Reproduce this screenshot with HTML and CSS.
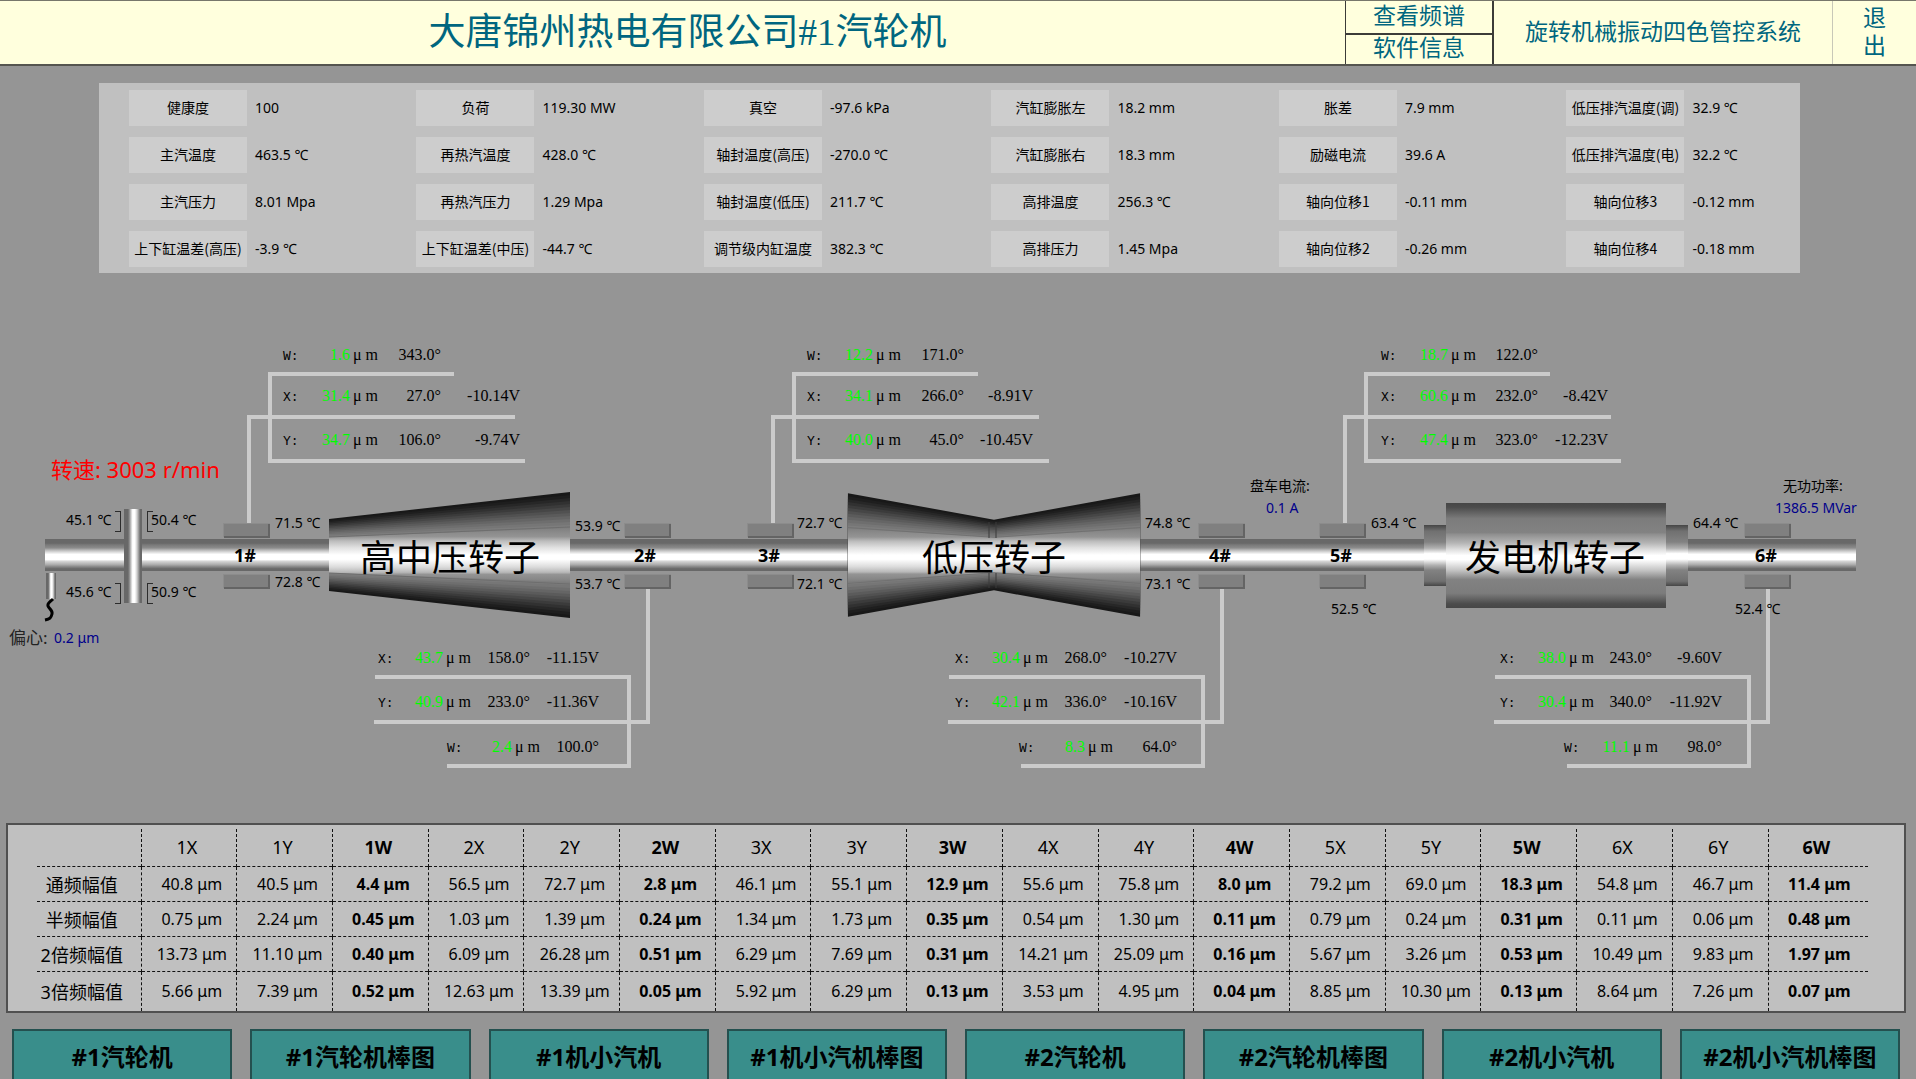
FILE: index.html
```html
<!DOCTYPE html>
<html lang="zh-CN">
<head>
<meta charset="utf-8">
<title>大唐锦州热电有限公司#1汽轮机</title>
<link rel="stylesheet" href="styles.css">
</head>
<body>
<header class="topbar">
  <h1 class="title">大唐锦州热电有限公司#1汽轮机</h1>
  <div class="tools">
    <button type="button" class="tool">查看频谱</button>
    <button type="button" class="tool">软件信息</button>
  </div>
  <div class="system">旋转机械振动四色管控系统</div>
  <button type="button" class="exit">退<br>出</button>
</header>

<main>
<dl class="summary">
  <div class="item"><dt>健康度</dt><dd>100</dd></div>
  <div class="item"><dt>主汽温度</dt><dd>463.5 ℃</dd></div>
  <div class="item"><dt>主汽压力</dt><dd>8.01 Mpa</dd></div>
  <div class="item"><dt>上下缸温差(高压)</dt><dd>-3.9 ℃</dd></div>
  <div class="item"><dt>负荷</dt><dd>119.30 MW</dd></div>
  <div class="item"><dt>再热汽温度</dt><dd>428.0 ℃</dd></div>
  <div class="item"><dt>再热汽压力</dt><dd>1.29 Mpa</dd></div>
  <div class="item"><dt>上下缸温差(中压)</dt><dd>-44.7 ℃</dd></div>
  <div class="item"><dt>真空</dt><dd>-97.6 kPa</dd></div>
  <div class="item"><dt>轴封温度(高压)</dt><dd>-270.0 ℃</dd></div>
  <div class="item"><dt>轴封温度(低压)</dt><dd>211.7 ℃</dd></div>
  <div class="item"><dt>调节级内缸温度</dt><dd>382.3 ℃</dd></div>
  <div class="item"><dt>汽缸膨胀左</dt><dd>18.2 mm</dd></div>
  <div class="item"><dt>汽缸膨胀右</dt><dd>18.3 mm</dd></div>
  <div class="item"><dt>高排温度</dt><dd>256.3 ℃</dd></div>
  <div class="item"><dt>高排压力</dt><dd>1.45 Mpa</dd></div>
  <div class="item"><dt>胀差</dt><dd>7.9 mm</dd></div>
  <div class="item"><dt>励磁电流</dt><dd>39.6 A</dd></div>
  <div class="item"><dt>轴向位移1</dt><dd>-0.11 mm</dd></div>
  <div class="item"><dt>轴向位移2</dt><dd>-0.26 mm</dd></div>
  <div class="item"><dt>低压排汽温度(调)</dt><dd>32.9 ℃</dd></div>
  <div class="item"><dt>低压排汽温度(电)</dt><dd>32.2 ℃</dd></div>
  <div class="item"><dt>轴向位移3</dt><dd>-0.12 mm</dd></div>
  <div class="item"><dt>轴向位移4</dt><dd>-0.18 mm</dd></div>
</dl>

<svg class="diagram" viewBox="0 273 1916 550" role="img" aria-label="汽轮机轴系图">
  <defs>
    <linearGradient id="shaft" x1="0" y1="0" x2="0" y2="1">
      <stop offset="0" stop-color="#686868"/><stop offset=".13" stop-color="#686868"/>
      <stop offset=".18" stop-color="#787878"/><stop offset=".28" stop-color="#8c8c8c"/>
      <stop offset=".34" stop-color="#b4b4b4"/><stop offset=".42" stop-color="#e0e0e0"/>
      <stop offset=".48" stop-color="#fff"/><stop offset=".64" stop-color="#fff"/>
      <stop offset=".7" stop-color="#d4d4d4"/><stop offset=".8" stop-color="#acacac"/>
      <stop offset=".87" stop-color="#868686"/><stop offset=".93" stop-color="#686868"/>
      <stop offset="1" stop-color="#686868"/>
    </linearGradient>
    <linearGradient id="disc">
      <stop offset="0" stop-color="#686868"/><stop offset=".22" stop-color="#686868"/>
      <stop offset=".3" stop-color="#8c8c8c"/><stop offset=".4" stop-color="#d0d0d0"/>
      <stop offset=".48" stop-color="#fff"/><stop offset=".6" stop-color="#fff"/>
      <stop offset=".72" stop-color="#d0d0d0"/><stop offset=".84" stop-color="#8c8c8c"/>
      <stop offset=".9" stop-color="#686868"/><stop offset="1" stop-color="#686868"/>
    </linearGradient>
    <linearGradient id="core" gradientUnits="userSpaceOnUse" x1="0" y1="-27" x2="0" y2="27">
      <stop offset="0" stop-color="#808080"/><stop offset=".16" stop-color="#949494"/>
      <stop offset=".24" stop-color="#bcbcbc"/><stop offset=".36" stop-color="#e0e0e0"/>
      <stop offset=".5" stop-color="#fff"/><stop offset=".58" stop-color="#fff"/>
      <stop offset=".72" stop-color="#dcdcdc"/><stop offset=".82" stop-color="#b8b8b8"/>
      <stop offset=".86" stop-color="#949494"/><stop offset="1" stop-color="#808080"/>
    </linearGradient>
    <linearGradient id="generator" x1="0" y1="0" x2="0" y2="1">
      <stop offset="0" stop-color="#464646"/><stop offset=".04" stop-color="#4c4c4c"/>
      <stop offset=".15" stop-color="#7c7c7c"/><stop offset=".28" stop-color="#828282"/>
      <stop offset=".3" stop-color="#909090"/><stop offset=".38" stop-color="#b4b4b4"/>
      <stop offset=".44" stop-color="#dcdcdc"/><stop offset=".5" stop-color="#fff"/>
      <stop offset=".54" stop-color="#fff"/><stop offset=".64" stop-color="#c4c4c4"/>
      <stop offset=".71" stop-color="#909090"/><stop offset=".73" stop-color="#828282"/>
      <stop offset=".86" stop-color="#7c7c7c"/><stop offset=".96" stop-color="#4c4c4c"/>
      <stop offset="1" stop-color="#464646"/>
    </linearGradient>
    <linearGradient id="collar" x1="0" y1="0" x2="0" y2="1">
      <stop offset="0" stop-color="#464646"/><stop offset=".1" stop-color="#707070"/>
      <stop offset=".28" stop-color="#828282"/><stop offset=".38" stop-color="#b0b0b0"/>
      <stop offset=".47" stop-color="#fff"/><stop offset=".56" stop-color="#fff"/>
      <stop offset=".66" stop-color="#b0b0b0"/><stop offset=".74" stop-color="#828282"/>
      <stop offset=".92" stop-color="#707070"/><stop offset="1" stop-color="#464646"/>
    </linearGradient>
    <!-- conical casing, narrow end at the origin, centred on the shaft axis -->
    <g id="cone">
      <path fill="#181818" d="M0-36 241-63V63L0 36Z"/>
      <path fill="#1e1e1e" d="M0-34.5 241-60V60L0 34.5Z"/>
      <path fill="#272727" d="M0-33 241-57V57L0 33Z"/>
      <path fill="#313131" d="M0-31.5 241-54V54L0 31.5Z"/>
      <path fill="#3b3b3b" d="M0-30 241-51V51L0 30Z"/>
      <path fill="#464646" d="M0-28.5 241-48V48L0 28.5Z"/>
      <path fill="#515151" d="M0-27 241-45V45L0 27Z"/>
      <path fill="#5b5b5b" d="M0-25.5 241-42V42L0 25.5Z"/>
      <path fill="#656565" d="M0-24 241-39V39L0 24Z"/>
      <path fill="#6e6e6e" d="M0-22.5 241-36V36L0 22.5Z"/>
      <path fill="#767676" d="M0-21 241-33V33L0 21Z"/>
      <path fill="#7d7d7d" d="M0-19.5 241-30V30L0 19.5Z"/>
      <path fill="url(#core)" d="M0-18 241-27V27L0 18Z"/>
      <path fill="none" stroke="#6e6e6e" d="M0-18 241-28M0 18 241 29"/>
    </g>
    <g id="pad">
      <path fill="#8c8c8c" d="M-1-1H46V13H-1Z"/>
      <path fill="#646464" d="M0 14V12H44V0H46V14Z"/>
      <path fill="#808080" d="M0 0H44V12H0Z"/>
    </g>
    <g id="lead-up">
      <path d="M184 374H0V461H255M245 417H-21V523"/>
    </g>
    <g id="lead-down">
      <path d="M-254 677H0V766H-182M-255 722H19V588"/>
    </g>
  </defs>

  <rect x="45" y="539" width="1811" height="32" fill="url(#shaft)"/>
  <rect x="124" y="509" width="18" height="94" fill="url(#disc)"/>
  <rect x="46" y="573" width="10" height="26" fill="url(#disc)"/>
  <path class="wire" d="M53 599C50 602 47 603 48 606S53 610 52 614 50 619 45 620"/>
  <path class="bracket" d="M115 511H120V531H115M115 583H120V603H115M153 511H147V531H153M153 583H147V603H153"/>

  <use href="#cone" transform="translate(329 555)"/>
  <use href="#cone" transform="translate(994 555) scale(.606 .98)"/>
  <use href="#cone" transform="translate(994 555) scale(-.606 .98)"/>
  <path class="seam" d="M989 522V538M996 522V538M989 573V588M996 573V588"/>
  <rect x="1424" y="525" width="22" height="61" fill="url(#collar)"/>
  <rect x="1666" y="525" width="22" height="61" fill="url(#collar)"/>
  <rect x="1446" y="503" width="220" height="105" fill="url(#generator)"/>

  <g class="leads">
    <use href="#lead-up" x="270"/><use href="#lead-up" x="794"/><use href="#lead-up" x="1366"/>
    <use href="#lead-down" x="629"/><use href="#lead-down" x="1203"/><use href="#lead-down" x="1749"/>
  </g>

  <use href="#pad" x="224" y="524"/><use href="#pad" x="224" y="575"/>
  <use href="#pad" x="625" y="524"/><use href="#pad" x="625" y="575"/>
  <use href="#pad" x="748" y="524"/><use href="#pad" x="748" y="575"/>
  <use href="#pad" x="1199" y="524"/><use href="#pad" x="1199" y="575"/>
  <use href="#pad" x="1320" y="524"/><use href="#pad" x="1320" y="575"/>
  <use href="#pad" x="1745" y="524"/><use href="#pad" x="1745" y="575"/>

  <g class="rotor">
    <text x="450" y="571">高中压转子</text>
    <text x="994" y="571">低压转子</text>
    <text x="1555" y="571">发电机转子</text>
  </g>
  <g class="bearing">
    <text x="245" y="562">1#</text><text x="645" y="562">2#</text><text x="769" y="562">3#</text>
    <text x="1220" y="562">4#</text><text x="1341" y="562">5#</text><text x="1766" y="562">6#</text>
  </g>

  <text class="speed" x="51" y="478">转速: 3003 r/min</text>
  <g class="temp">
    <text x="66" y="525">45.1 ℃</text><text x="151" y="525">50.4 ℃</text>
    <text x="66" y="597">45.6 ℃</text><text x="151" y="597">50.9 ℃</text>
    <text x="275" y="528">71.5 ℃</text><text x="275" y="587">72.8 ℃</text>
    <text x="575" y="531">53.9 ℃</text><text x="575" y="589">53.7 ℃</text>
    <text x="797" y="528">72.7 ℃</text><text x="797" y="589">72.1 ℃</text>
    <text x="1145" y="528">74.8 ℃</text><text x="1145" y="589">73.1 ℃</text>
    <text x="1371" y="528">63.4 ℃</text><text x="1331" y="614">52.5 ℃</text>
    <text x="1693" y="528">64.4 ℃</text><text x="1735" y="614">52.4 ℃</text>
    <text x="1250" y="491">盘车电流:</text><text x="1783" y="491">无功功率:</text>
    <text class="aux" x="1266" y="513">0.1 A</text><text class="aux" x="1775" y="513">1386.5 MVar</text>
    <text class="ecc" x="9" y="644">偏心:</text><text class="aux" x="54" y="643">0.2 μm</text>
  </g>

  <g class="probe">
    <text y="360"><tspan class="ch" x="283">W:</tspan><tspan class="amp" x="350">1.6</tspan><tspan x="353">μ m</tspan><tspan class="end" x="441">343.0°</tspan></text>
    <text y="401"><tspan class="ch" x="283">X:</tspan><tspan class="amp" x="350">31.4</tspan><tspan x="353">μ m</tspan><tspan class="end" x="441">27.0°</tspan><tspan class="end" x="520">-10.14V</tspan></text>
    <text y="445"><tspan class="ch" x="283">Y:</tspan><tspan class="amp" x="350">34.7</tspan><tspan x="353">μ m</tspan><tspan class="end" x="441">106.0°</tspan><tspan class="end" x="520">-9.74V</tspan></text>

    <text y="360"><tspan class="ch" x="807">W:</tspan><tspan class="amp" x="873">12.2</tspan><tspan x="876">μ m</tspan><tspan class="end" x="964">171.0°</tspan></text>
    <text y="401"><tspan class="ch" x="807">X:</tspan><tspan class="amp" x="873">34.1</tspan><tspan x="876">μ m</tspan><tspan class="end" x="964">266.0°</tspan><tspan class="end" x="1033">-8.91V</tspan></text>
    <text y="445"><tspan class="ch" x="807">Y:</tspan><tspan class="amp" x="873">40.0</tspan><tspan x="876">μ m</tspan><tspan class="end" x="964">45.0°</tspan><tspan class="end" x="1033">-10.45V</tspan></text>

    <text y="360"><tspan class="ch" x="1381">W:</tspan><tspan class="amp" x="1448">18.7</tspan><tspan x="1451">μ m</tspan><tspan class="end" x="1538">122.0°</tspan></text>
    <text y="401"><tspan class="ch" x="1381">X:</tspan><tspan class="amp" x="1448">60.6</tspan><tspan x="1451">μ m</tspan><tspan class="end" x="1538">232.0°</tspan><tspan class="end" x="1608">-8.42V</tspan></text>
    <text y="445"><tspan class="ch" x="1381">Y:</tspan><tspan class="amp" x="1448">47.4</tspan><tspan x="1451">μ m</tspan><tspan class="end" x="1538">323.0°</tspan><tspan class="end" x="1608">-12.23V</tspan></text>

    <text y="663"><tspan class="ch" x="378">X:</tspan><tspan class="amp" x="443">43.7</tspan><tspan x="446">μ m</tspan><tspan class="end" x="530">158.0°</tspan><tspan class="end" x="599">-11.15V</tspan></text>
    <text y="707"><tspan class="ch" x="378">Y:</tspan><tspan class="amp" x="443">40.9</tspan><tspan x="446">μ m</tspan><tspan class="end" x="530">233.0°</tspan><tspan class="end" x="599">-11.36V</tspan></text>
    <text y="752"><tspan class="ch" x="447">W:</tspan><tspan class="amp" x="512">2.4</tspan><tspan x="515">μ m</tspan><tspan class="end" x="599">100.0°</tspan></text>

    <text y="663"><tspan class="ch" x="955">X:</tspan><tspan class="amp" x="1020">30.4</tspan><tspan x="1023">μ m</tspan><tspan class="end" x="1107">268.0°</tspan><tspan class="end" x="1177">-10.27V</tspan></text>
    <text y="707"><tspan class="ch" x="955">Y:</tspan><tspan class="amp" x="1020">42.1</tspan><tspan x="1023">μ m</tspan><tspan class="end" x="1107">336.0°</tspan><tspan class="end" x="1177">-10.16V</tspan></text>
    <text y="752"><tspan class="ch" x="1019">W:</tspan><tspan class="amp" x="1085">8.3</tspan><tspan x="1088">μ m</tspan><tspan class="end" x="1177">64.0°</tspan></text>

    <text y="663"><tspan class="ch" x="1500">X:</tspan><tspan class="amp" x="1566">38.0</tspan><tspan x="1569">μ m</tspan><tspan class="end" x="1652">243.0°</tspan><tspan class="end" x="1722">-9.60V</tspan></text>
    <text y="707"><tspan class="ch" x="1500">Y:</tspan><tspan class="amp" x="1566">30.4</tspan><tspan x="1569">μ m</tspan><tspan class="end" x="1652">340.0°</tspan><tspan class="end" x="1722">-11.92V</tspan></text>
    <text y="752"><tspan class="ch" x="1564">W:</tspan><tspan class="amp" x="1630">11.1</tspan><tspan x="1633">μ m</tspan><tspan class="end" x="1722">98.0°</tspan></text>
  </g>
</svg>

<div class="spectrum">
<table>
  <thead>
    <tr><td></td><th scope="col">1X</th><th scope="col">1Y</th><th scope="col">1W</th><th scope="col">2X</th><th scope="col">2Y</th><th scope="col">2W</th><th scope="col">3X</th><th scope="col">3Y</th><th scope="col">3W</th><th scope="col">4X</th><th scope="col">4Y</th><th scope="col">4W</th><th scope="col">5X</th><th scope="col">5Y</th><th scope="col">5W</th><th scope="col">6X</th><th scope="col">6Y</th><th scope="col">6W</th></tr>
  </thead>
  <tbody>
    <tr><th scope="row">通频幅值</th><td>40.8 μm</td><td>40.5 μm</td><td>4.4 μm</td><td>56.5 μm</td><td>72.7 μm</td><td>2.8 μm</td><td>46.1 μm</td><td>55.1 μm</td><td>12.9 μm</td><td>55.6 μm</td><td>75.8 μm</td><td>8.0 μm</td><td>79.2 μm</td><td>69.0 μm</td><td>18.3 μm</td><td>54.8 μm</td><td>46.7 μm</td><td>11.4 μm</td></tr>
    <tr><th scope="row">半频幅值</th><td>0.75 μm</td><td>2.24 μm</td><td>0.45 μm</td><td>1.03 μm</td><td>1.39 μm</td><td>0.24 μm</td><td>1.34 μm</td><td>1.73 μm</td><td>0.35 μm</td><td>0.54 μm</td><td>1.30 μm</td><td>0.11 μm</td><td>0.79 μm</td><td>0.24 μm</td><td>0.31 μm</td><td>0.11 μm</td><td>0.06 μm</td><td>0.48 μm</td></tr>
    <tr><th scope="row">2倍频幅值</th><td>13.73 μm</td><td>11.10 μm</td><td>0.40 μm</td><td>6.09 μm</td><td>26.28 μm</td><td>0.51 μm</td><td>6.29 μm</td><td>7.69 μm</td><td>0.31 μm</td><td>14.21 μm</td><td>25.09 μm</td><td>0.16 μm</td><td>5.67 μm</td><td>3.26 μm</td><td>0.53 μm</td><td>10.49 μm</td><td>9.83 μm</td><td>1.97 μm</td></tr>
    <tr><th scope="row">3倍频幅值</th><td>5.66 μm</td><td>7.39 μm</td><td>0.52 μm</td><td>12.63 μm</td><td>13.39 μm</td><td>0.05 μm</td><td>5.92 μm</td><td>6.29 μm</td><td>0.13 μm</td><td>3.53 μm</td><td>4.95 μm</td><td>0.04 μm</td><td>8.85 μm</td><td>10.30 μm</td><td>0.13 μm</td><td>8.64 μm</td><td>7.26 μm</td><td>0.07 μm</td></tr>
  </tbody>
</table>
</div>
</main>

<nav class="pages">
  <button type="button">#1汽轮机</button>
  <button type="button">#1汽轮机棒图</button>
  <button type="button">#1机小汽机</button>
  <button type="button">#1机小汽机棒图</button>
  <button type="button">#2汽轮机</button>
  <button type="button">#2汽轮机棒图</button>
  <button type="button">#2机小汽机</button>
  <button type="button">#2机小汽机棒图</button>
</nav>
</body>
</html>
```
FILE: styles.css
```css
:root {
  --ui: "Noto Sans", "Noto Sans CJK SC", sans-serif;
  --song: "Liberation Serif", "Noto Sans CJK SC", serif;
  --teal: #00667f;
  --cream: #ffffdd;
}

* { box-sizing: border-box; }

body {
  margin: 0;
  min-height: 100vh;
  display: flex;
  flex-direction: column;
  background: #959595;
  color: #000;
  font-family: var(--ui);
}

button {
  margin: 0;
  padding: 0;
  border: 0;
  background: none;
  color: inherit;
  font: inherit;
  cursor: pointer;
}

/* header */
.topbar {
  display: grid;
  grid-template-columns: 1fr 149px 338px 84px;
  grid-template-rows: minmax(0, 1fr);
  height: 66px;
  background: var(--cream);
  color: var(--teal);
  border-top: 1px solid #77776b;
  border-bottom: 2px solid #55554f;
  font-family: var(--song);
  font-size: 23px;
  line-height: 28px;
}

.title {
  display: flex;
  align-items: center;
  justify-content: center;
  margin: 0;
  padding-left: 30px;
  font-size: 37px;
  font-weight: 400;
}

.tools {
  display: grid;
  grid-template-rows: repeat(2, minmax(0, 1fr));
  border: solid #3c3c38;
  border-width: 0 2px 0 1px;
}

.tool + .tool { border-top: 2px solid #3c3c38; }

.system {
  display: flex;
  align-items: center;
  justify-content: center;
}

.exit { border-left: 1px solid #c8c8b8; }

/* process values */
.summary {
  display: grid;
  grid-template-columns: repeat(5, 16fr) 13fr;
  grid-template-rows: repeat(4, 36px);
  grid-auto-flow: column;
  row-gap: 11px;
  margin: 17px 116px 0 99px;
  padding: 7px 0 6px 30px;
  background: #c0c0c0;
  font-size: 14px;
}

.item {
  display: flex;
  align-items: center;
  gap: 8px;
}

.item dt {
  flex: none;
  display: flex;
  align-items: center;
  justify-content: center;
  width: 118px;
  height: 36px;
  padding-bottom: 2px;
  background: #cdcdcd;
  font-family: "Noto Sans CJK SC", sans-serif;
}

.item dd {
  margin: 0;
  padding-bottom: 2px;
  white-space: nowrap;
}

/* shaft train */
.diagram {
  display: block;
  width: 100%;
  height: auto;
}

.wire { fill: none; stroke: #000; stroke-width: 3; }
.bracket { fill: none; stroke: #2c2c2c; stroke-width: 1; shape-rendering: crispEdges; }
.seam { fill: none; stroke: #3a3a3a; stroke-width: 1; }
.leads { fill: none; stroke: #cbcbcb; stroke-width: 4; }

.rotor { font-size: 36px; text-anchor: middle; }
.bearing { font-size: 18px; font-weight: 700; text-anchor: middle; }
.speed { font-size: 22px; fill: #f00; }
.temp { font-size: 14px; }
.aux { fill: #00008b; }
.ecc { font-size: 17px; fill: #222; }

.probe { font-family: var(--song); font-size: 16px; }
.ch { font-family: "Liberation Mono", monospace; font-size: 13px; }
.amp { fill: #0f0; text-anchor: end; }
.end { text-anchor: end; }

/* spectrum table */
.spectrum {
  margin: 0 10px 0 6px;
  padding: 4px 36px 0 29px;
  background: #c0c0c0;
  border: 2px solid #505050;
}

table {
  width: 100%;
  table-layout: fixed;
  border-collapse: collapse;
  font-size: 16px;
}

tr { height: 35px; }
thead tr { height: 37px; }
tbody tr:last-child { height: 40px; }

th, td {
  padding: 0;
  border-left: 1px dashed #111;
  border-top: 1px dashed #111;
  text-align: center;
  white-space: nowrap;
}

th { font-size: 18px; font-weight: 400; }
tbody td { padding-left: 6px; }
thead th { padding-right: 4px; }
thead th, thead td { border-top: 0; }
tr > :first-child { width: 104px; border-left: 0; padding-right: 14px; }
tr > :last-child { width: 100px; padding-right: 4px; }
tr > :nth-child(3n + 4) { font-weight: 700; }

/* page switcher */
.pages {
  flex: 1;
  display: grid;
  grid-template-columns: repeat(8, 1fr);
  gap: 18px;
  margin-top: 16px;
  padding: 0 16px 0 12px;
}

.pages button {
  min-height: 50px;
  border: 2px solid #24504f;
  border-bottom: 0;
  background: #398e8b;
  font-size: 24px;
  font-weight: 700;
}
```
